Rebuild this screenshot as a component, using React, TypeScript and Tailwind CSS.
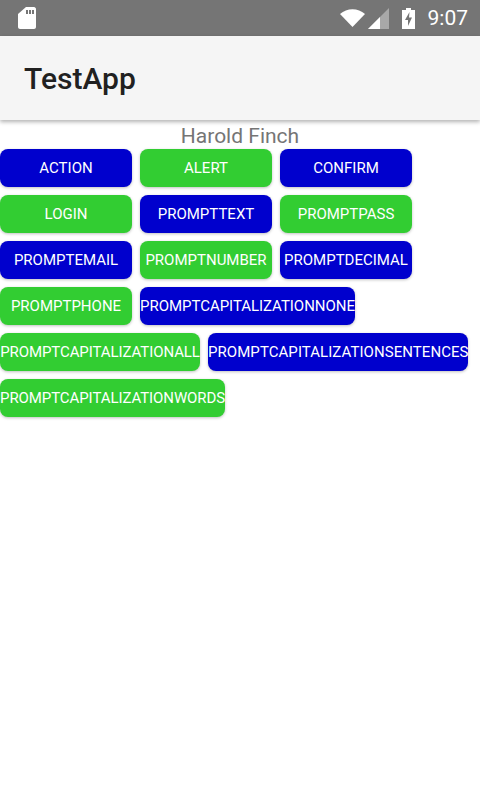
const BUTTONS = [
  { label: "Action", width: "min-w-[132px]" },
  { label: "Alert", width: "min-w-[132px]" },
  { label: "Confirm", width: "min-w-[132px]" },
  { label: "Login", width: "min-w-[132px]" },
  { label: "PromptText", width: "min-w-[132px]" },
  { label: "PromptPass", width: "min-w-[132px]" },
  { label: "PromptEmail", width: "min-w-[132px]" },
  { label: "PromptNumber", width: "min-w-[132px]" },
  { label: "PromptDecimal", width: "min-w-[132px]" },
  { label: "PromptPhone", width: "min-w-[132px]" },
  { label: "PromptCapitalizationNone", width: "w-[215px] tracking-[-0.04px]" },
  { label: "PromptCapitalizationAll", width: "w-[200px] tracking-[-0.08px]" },
  { label: "PromptCapitalizationSentences", width: "w-[260px] tracking-[0.06px]" },
  { label: "PromptCapitalizationWords", width: "w-[225px] tracking-[-0.08px]" },
];

function StatusIcons() {
  return (
    <div className="flex items-center">
      {/* wifi */}
      <svg width="25" height="18" viewBox="0 0 25 18" className="mr-[3px]">
        <path d="M0 5 C7 -1.5 18 -1.5 25 5 L12.5 18 Z" fill="#ffffff" />
      </svg>
      {/* signal */}
      <svg width="21" height="21" viewBox="0 0 21 21" className="mr-[13px]">
        <path d="M0 21 L21 0 V21 Z" fill="#a8a8a8" />
        <path d="M0 21 L12 9 V21 Z" fill="#ffffff" />
      </svg>
      {/* battery charging */}
      <svg width="13" height="21" viewBox="0 0 13 21" className="mr-[13px]">
        <path d="M4 0 H9 V2 H13 V21 H0 V2 H4 Z" fill="#ffffff" />
        <path d="M7.5 4 L3 12 H6 V18 L10 9.5 H7 Z" fill="#757575" />
      </svg>
    </div>
  );
}

export default function App() {
  return (
    <div className="w-[480px] h-[800px] bg-white overflow-hidden font-['Roboto',sans-serif]">
      <div className="h-9 bg-[#757575] flex items-center justify-between pl-[18px] pr-3">
        <svg width="18" height="22" viewBox="0 0 18 22">
          <path
            d="M8 0 H16 C17 0 18 1 18 2 V20 C18 21 17 22 16 22 H2 C1 22 0 21 0 20 V7 Z"
            fill="#ffffff"
          />
          <path d="M8 3 H10 V7 H8 Z M11 3 H13 V7 H11 Z M14 3 H16 V7 H14 Z" fill="#757575" />
        </svg>
        <div className="flex items-center">
          <StatusIcons />
          <span className="text-[21px] leading-none text-white">9:07</span>
        </div>
      </div>

      <div className="h-[84px] bg-[#f5f5f5] flex items-center pl-6 pt-[2px] shadow-[0_2px_4px_rgba(0,0,0,0.3)]">
        <span className="text-[30px] leading-none font-medium text-[#212121]">TestApp</span>
      </div>

      <div className="text-center text-[21px] leading-[29px] pt-[2px] h-[29px] text-[#757575]">Harold Finch</div>

      <div className="flex flex-wrap gap-x-2 gap-y-2">
        {BUTTONS.map((b, i) => (
          <button
            key={b.label}
            className={`h-[38px] rounded-[8px] uppercase text-[15px] whitespace-nowrap text-white shadow-[0_1px_3px_rgba(0,0,0,0.25)] ${b.width} ${
              i % 2 === 0 ? "bg-[#0000cd]" : "bg-[#32cd32]"
            }`}
          >
            {b.label}
          </button>
        ))}
      </div>
    </div>
  );
}
